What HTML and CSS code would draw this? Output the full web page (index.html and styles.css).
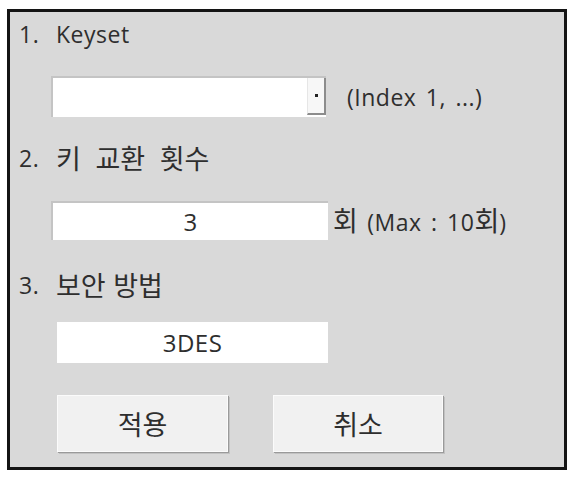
FILE: index.html
```html
<!DOCTYPE html>
<html lang="ko">
<head>
<meta charset="utf-8">
<link rel="stylesheet" href="styles.css">
</head>
<body>
<div class="panel">
  <div class="label label-1"><span class="num">1.</span><span>Keyset</span></div>
  <div class="row row-1">
    <div class="combo">
      <div class="combo-field"></div>
      <div class="combo-btn"><span class="dot"></span></div>
    </div>
    <span class="hint hint-index">(Index 1, ...)</span>
  </div>
  <div class="label label-2"><span class="num">2.</span><span class="ko ko-wide">키 교환 횟수</span></div>
  <div class="row row-2">
    <div class="field field-count">3</div>
    <span class="hint hint-max"><span class="ko">회</span> (Max : 10<span class="ko">회</span>)</span>
  </div>
  <div class="label label-3"><span class="num">3.</span><span class="ko">보안 방법</span></div>
  <div class="row row-3">
    <div class="field field-method">3DES</div>
  </div>
  <div class="buttons">
    <div class="btn btn-apply"><span class="ko">적용</span></div>
    <div class="btn btn-cancel"><span class="ko">취소</span></div>
  </div>
</div>
</body>
</html>
```
FILE: styles.css
```css
html, body {
  margin: 0;
  padding: 0;
  background: #ffffff;
}

body {
  font-family: "Open Sans", "Noto Sans CJK KR", sans-serif;
  font-size: 23px;
  letter-spacing: 0.5px;
  word-spacing: 3px;
  color: #2e2e2e;
}

.ko {
  font-family: "Noto Sans CJK KR", sans-serif;
  font-size: 27px;
  letter-spacing: 0;
  word-spacing: 0;
}

.ko-wide {
  word-spacing: 7px;
}

.panel {
  box-sizing: border-box;
  margin: 9px 0 0 7px;
  width: 560px;
  height: 461px;
  border: 3px solid #141414;
  background: #d9d9d9;
  display: flex;
  flex-direction: column;
  align-items: flex-start;
}

.label {
  display: flex;
  align-items: center;
  height: 30px;
  line-height: 30px;
  margin-left: 9px;
}

.num {
  width: 37px;
}

.label-1 { margin-top: 7px; }
.label-2 { margin-top: 26px; }
.label-3 { margin-top: 30px; }

.row {
  display: flex;
  align-items: center;
}

.row-1 { margin-top: 27px; margin-left: 41px; }
.row-2 { margin-top: 28px; margin-left: 41px; }
.row-3 { margin-top: 22px; margin-left: 47px; }

.combo {
  box-sizing: border-box;
  width: 275px;
  height: 41px;
  display: flex;
  border-top: 2px solid #c4c4c4;
  border-left: 2px solid #c4c4c4;
  background: #ffffff;
}

.combo-field {
  flex: 1;
}

.combo-btn {
  box-sizing: border-box;
  width: 19px;
  height: 37px;
  background: #f7f7f7;
  border-left: 1px solid #e6e6e6;
  border-right: 2px solid #8c8c8c;
  border-bottom: 2px solid #8c8c8c;
  display: flex;
  align-items: center;
  justify-content: center;
}

.dot {
  width: 3px;
  height: 3px;
  background: #222;
}

.hint {
  display: flex;
  align-items: baseline;
  line-height: 30px;
  white-space: pre;
}

.hint-index { margin-left: 21px; }
.hint-max { margin-left: 5px; }

.field {
  box-sizing: border-box;
  background: #ffffff;
  display: flex;
  align-items: center;
  justify-content: center;
  font-size: 24px;
}

.field-count {
  width: 277px;
  height: 39px;
  border-top: 2px solid #c4c4c4;
  border-left: 2px solid #c4c4c4;
}

.field-method {
  width: 271px;
  height: 41px;
}

.buttons {
  display: flex;
  margin-top: 32px;
  margin-left: 47px;
  gap: 45px;
}

.btn {
  box-sizing: border-box;
  width: 171px;
  height: 57px;
  background: #f1f1f1;
  border: 1px solid #fbfbfb;
  box-shadow: 1px 1px 0 #9a9a9a, 2px 2px 0 #c2c2c2;
  display: flex;
  align-items: center;
  justify-content: center;
}

.btn-cancel { width: 170px; }
```
